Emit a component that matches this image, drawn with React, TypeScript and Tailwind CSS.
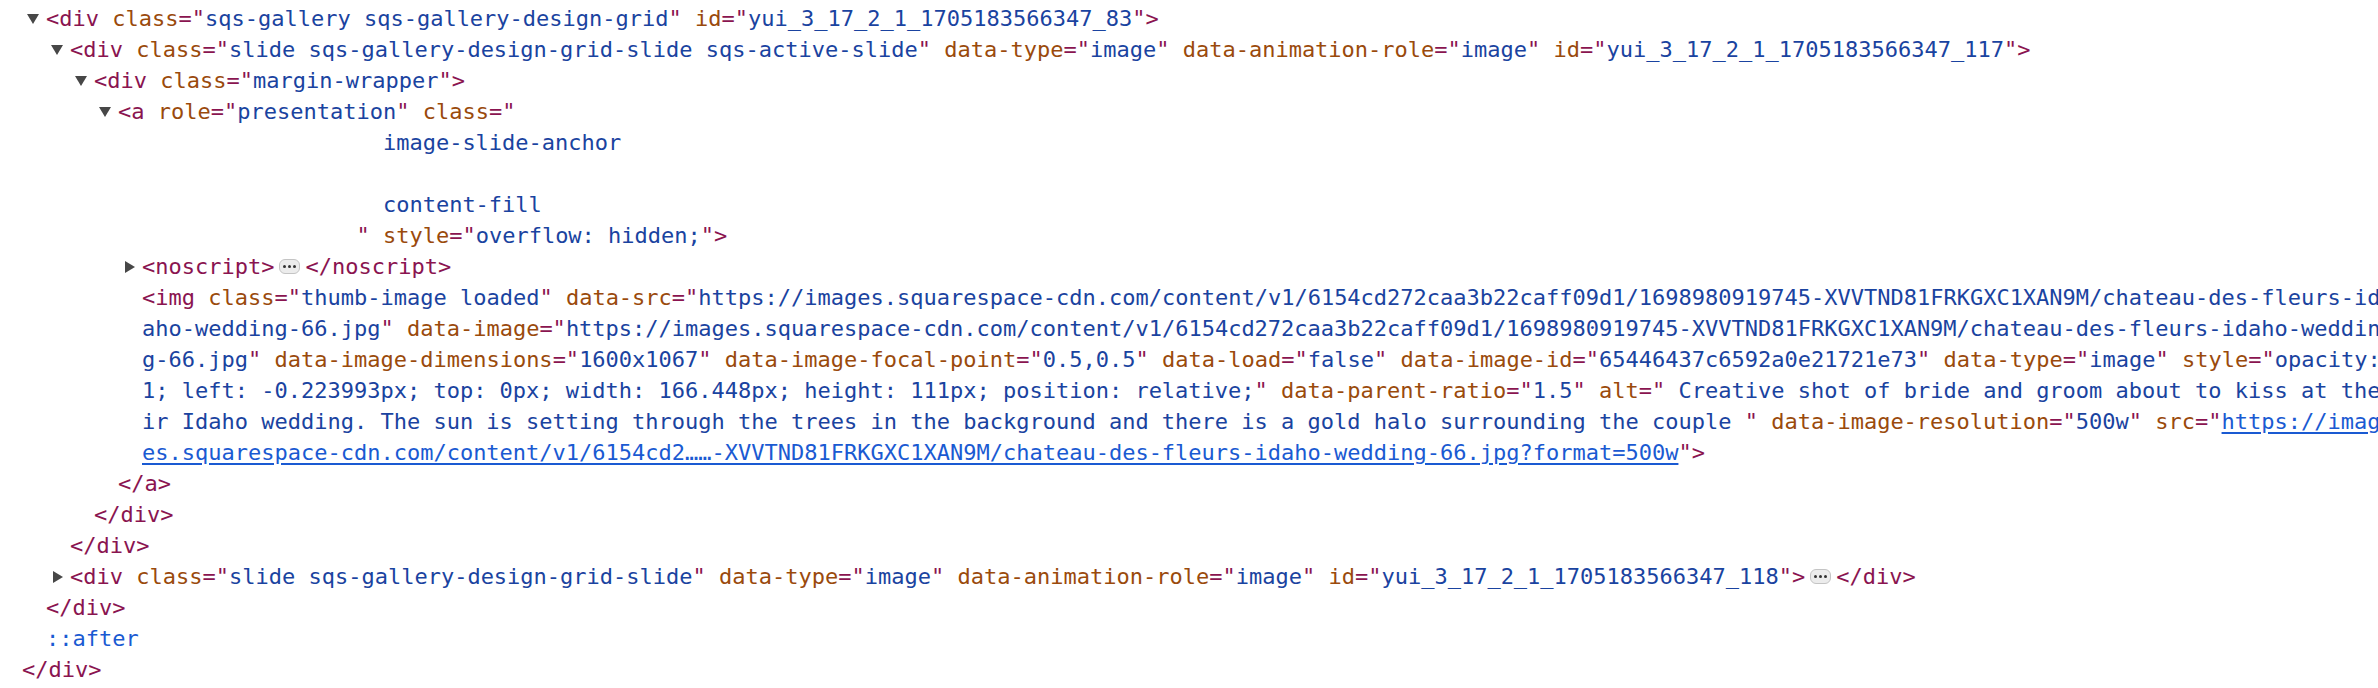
type Kind = 't' | 'a' | 'v' | 'l' | 'p' | 's' | 'b';
type Seg = [Kind, string];

const tone: Record<Kind, string> = {
  t: 'text-[#8a1450]',
  a: 'text-[#9a4a0c]',
  v: 'text-[#1a43a0]',
  l: 'text-[#1a5ad2] underline underline-offset-[3px]',
  p: 'text-[#1a5ad2]',
  s: 'text-black',
  b: '',
};

const indent = [
  'pl-[22px]',
  'pl-[46px]',
  'pl-[70px]',
  'pl-[94px]',
  'pl-[118px]',
  'pl-[142px]',
];

const attr = (name: string, value: string): Seg[] => [
  ['s', ' '],
  ['a', name],
  ['t', '="'],
  ['v', value],
  ['t', '"'],
];

const IMG_URL =
  'https://images.squarespace-cdn.com/content/v1/6154cd272caa3b22caff09d1/1698980919745-XVVTND81FRKGXC1XAN9M/chateau-des-fleurs-idaho-wedding-66.jpg';

const imgSegs: Seg[] = [
  ['t', '<img'],
  ...attr('class', 'thumb-image loaded'),
  ...attr('data-src', IMG_URL),
  ...attr('data-image', IMG_URL),
  ...attr('data-image-dimensions', '1600x1067'),
  ...attr('data-image-focal-point', '0.5,0.5'),
  ...attr('data-load', 'false'),
  ...attr('data-image-id', '65446437c6592a0e21721e73'),
  ...attr('data-type', 'image'),
  ...attr(
    'style',
    'opacity: 1; left: -0.223993px; top: 0px; width: 166.448px; height: 111px; position: relative;'
  ),
  ...attr('data-parent-ratio', '1.5'),
  ...attr(
    'alt',
    ' Creative shot of bride and groom about to kiss at their Idaho wedding. The sun is setting through the trees in the background and there is a gold halo surrounding the couple '
  ),
  ...attr('data-image-resolution', '500w'),
  ['s', ' '],
  ['a', 'src'],
  ['t', '="'],
  [
    'l',
    'https://images.squarespace-cdn.com/content/v1/6154cd2\u2026\u2026-XVVTND81FRKGXC1XAN9M/chateau-des-fleurs-idaho-wedding-66.jpg?format=500w',
  ],
  ['t', '">'],
];

// break the long img tag the way the panel wraps it (169 columns, hanging space)
function wrap(segs: Seg[], cols: number): Seg[][] {
  const chars: [Kind, string][] = [];
  segs.forEach(([k, txt]) => Array.from(txt).forEach((c) => chars.push([k, c])));
  const rows: Seg[][] = [];
  let i = 0;
  while (i < chars.length) {
    const slice = chars.slice(i, i + cols);
    i += cols;
    if (chars[i] && chars[i][1] === ' ') i++;
    const row: Seg[] = [];
    slice.forEach(([k, c]) => {
      const last = row[row.length - 1];
      if (last && last[0] === k) last[1] += c;
      else row.push([k, c]);
    });
    rows.push(row);
  }
  return rows;
}

type Line = { depth: number; arrow?: 'down' | 'right'; segs: Seg[] };

const lines: Line[] = [
  {
    depth: 1,
    arrow: 'down',
    segs: [
      ['t', '<div'],
      ...attr('class', 'sqs-gallery sqs-gallery-design-grid'),
      ...attr('id', 'yui_3_17_2_1_1705183566347_83'),
      ['t', '>'],
    ],
  },
  {
    depth: 2,
    arrow: 'down',
    segs: [
      ['t', '<div'],
      ...attr('class', 'slide sqs-gallery-design-grid-slide sqs-active-slide'),
      ...attr('data-type', 'image'),
      ...attr('data-animation-role', 'image'),
      ...attr('id', 'yui_3_17_2_1_1705183566347_117'),
      ['t', '>'],
    ],
  },
  {
    depth: 3,
    arrow: 'down',
    segs: [['t', '<div'], ...attr('class', 'margin-wrapper'), ['t', '>']],
  },
  {
    depth: 4,
    arrow: 'down',
    segs: [
      ['t', '<a'],
      ...attr('role', 'presentation'),
      ['s', ' '],
      ['a', 'class'],
      ['t', '="'],
    ],
  },
  { depth: 4, segs: [['s', ' '.repeat(20)], ['v', 'image-slide-anchor']] },
  { depth: 4, segs: [] },
  { depth: 4, segs: [['s', ' '.repeat(20)], ['v', 'content-fill']] },
  {
    depth: 4,
    segs: [['s', ' '.repeat(18)], ['t', '"'], ...attr('style', 'overflow: hidden;'), ['t', '>']],
  },
  {
    depth: 5,
    arrow: 'right',
    segs: [['t', '<noscript>'], ['b', ''], ['t', '</noscript>']],
  },
  ...wrap(imgSegs, 169).map((segs) => ({ depth: 5, segs })),
  { depth: 4, segs: [['t', '</a>']] },
  { depth: 3, segs: [['t', '</div>']] },
  { depth: 2, segs: [['t', '</div>']] },
  {
    depth: 2,
    arrow: 'right',
    segs: [
      ['t', '<div'],
      ...attr('class', 'slide sqs-gallery-design-grid-slide'),
      ...attr('data-type', 'image'),
      ...attr('data-animation-role', 'image'),
      ...attr('id', 'yui_3_17_2_1_1705183566347_118'),
      ['t', '>'],
      ['b', ''],
      ['t', '</div>'],
    ],
  },
  { depth: 1, segs: [['t', '</div>']] },
  { depth: 1, segs: [['p', '::after']] },
  { depth: 0, segs: [['t', '</div>']] },
];

function Arrow({ dir }: { dir: 'down' | 'right' }) {
  return (
    <span className="-ml-[19px] flex w-[19px] shrink-0 items-center">
      {dir === 'down' ? (
        <svg width="12" height="10" viewBox="0 0 12 10">
          <path d="M0 0h12L6 10z" fill="#474747" />
        </svg>
      ) : (
        <svg width="10" height="12" viewBox="0 0 10 12" className="ml-[2px]">
          <path d="M0 0v12l10-6z" fill="#474747" />
        </svg>
      )}
    </span>
  );
}

function Ellipsis() {
  return (
    <span className="mx-[5px] inline-flex h-[15px] w-[21px] items-center justify-center gap-[2px] rounded-[6px] border border-[#c4c4c4] bg-[#ececec]">
      <span className="h-[3px] w-[3px] rounded-full bg-[#333]" />
      <span className="h-[3px] w-[3px] rounded-full bg-[#333]" />
      <span className="h-[3px] w-[3px] rounded-full bg-[#333]" />
    </span>
  );
}

export default function App() {
  return (
    <div
      className="h-[688px] w-[2378px] overflow-hidden bg-white pt-[3px] text-[22px] leading-[31px]"
      style={{ fontFamily: '"DejaVu Sans Mono", "Liberation Mono", monospace' }}
    >
      {lines.map((line, i) => (
        <div
          key={i}
          className={`flex h-[31px] items-center whitespace-pre ${indent[line.depth]}`}
        >
          {line.arrow && <Arrow dir={line.arrow} />}
          {line.segs.map(([k, txt], j) =>
            k === 'b' ? <Ellipsis key={j} /> : (
              <span key={j} className={tone[k]}>
                {txt}
              </span>
            )
          )}
        </div>
      ))}
    </div>
  );
}
